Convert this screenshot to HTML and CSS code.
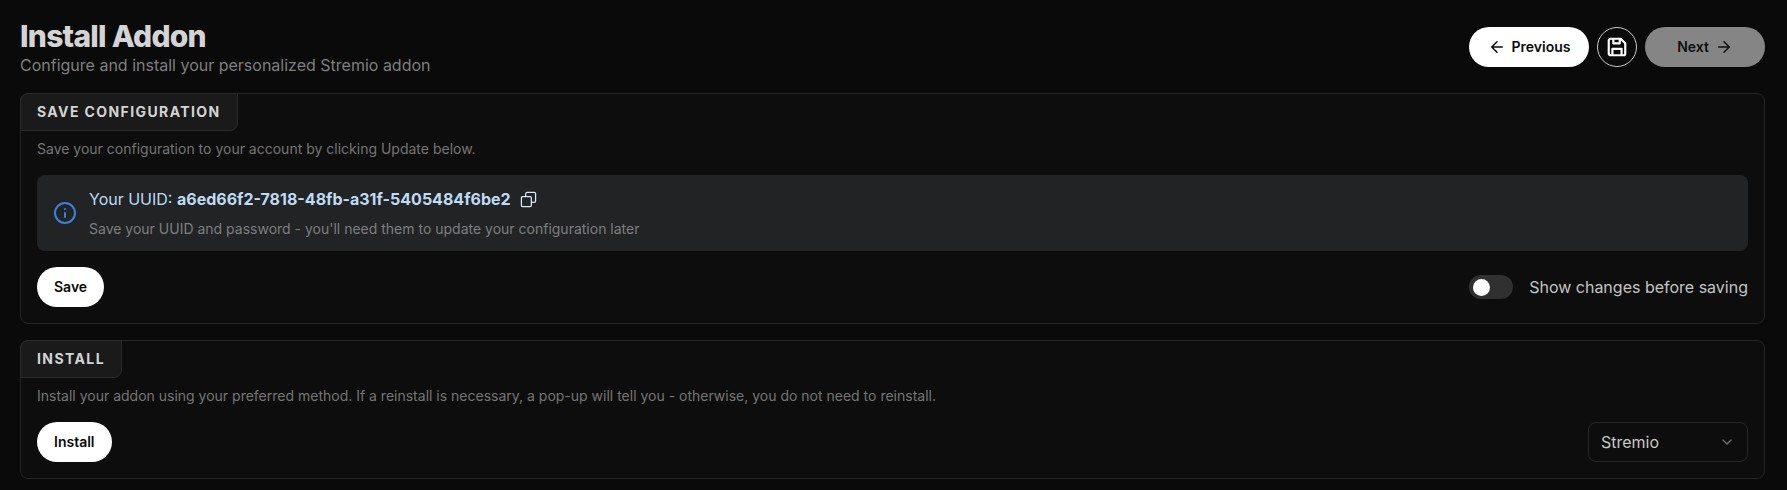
FILE: index.html
```html
<!DOCTYPE html>
<html lang="en">
<head>
<meta charset="utf-8">
<title>Install Addon</title>
<link rel="stylesheet" href="styles.css">
</head>
<body>
<main class="page">
  <header class="head">
    <div class="titles">
      <h1>Install Addon</h1>
      <p class="subtitle">Configure and install your personalized Stremio addon</p>
    </div>
    <div class="nav">
      <button class="btn btn-nav"><svg class="ico" viewBox="0 0 24 24"><path d="M19 12H5M12 19l-7-7 7-7"/></svg>Previous</button>
      <button class="btn-round"><svg class="ico-save" viewBox="0 0 24 24"><path d="M5 3h11l5 5v11a2 2 0 0 1-2 2H5a2 2 0 0 1-2-2V5a2 2 0 0 1 2-2z"/><path d="M8 3v5h7V3"/><path d="M7 21v-7h10v7"/></svg></button>
      <button class="btn btn-nav btn-off">Next<svg class="ico" viewBox="0 0 24 24"><path d="M5 12h14M12 5l7 7-7 7"/></svg></button>
    </div>
  </header>

  <section class="card">
    <h2 class="tab">SAVE CONFIGURATION</h2>
    <div class="body">
      <p class="desc">Save your configuration to your account by clicking Update below.</p>
      <div class="alert">
        <svg class="ico-info" viewBox="0 0 24 24"><circle cx="12" cy="12" r="10"/><path d="M12 16v-4M12 8h.01"/></svg>
        <div class="alert-text">
          <div class="uuid">Your UUID: <strong>a6ed66f2-7818-48fb-a31f-5405484f6be2</strong><svg class="ico-copy" viewBox="0 0 24 24"><rect x="2" y="8" width="14" height="14" rx="1.5"/><path d="M8 8V4a2 2 0 0 1 2-2h10a2 2 0 0 1 2 2v10a2 2 0 0 1-2 2h-4"/></svg></div>
          <p class="alert-sub">Save your UUID and password - you'll need them to update your configuration later</p>
        </div>
      </div>
      <div class="row">
        <button class="btn">Save</button>
        <label class="toggle"><span class="switch"><span class="knob"></span></span><span>Show changes before saving</span></label>
      </div>
    </div>
  </section>

  <section class="card">
    <h2 class="tab">INSTALL</h2>
    <div class="body">
      <p class="desc">Install your addon using your preferred method. If a reinstall is necessary, a pop-up will tell you - otherwise, you do not need to reinstall.</p>
      <div class="row">
        <button class="btn">Install</button>
        <div class="select"><span>Stremio</span><svg class="ico-chev" viewBox="0 0 24 24"><path d="M6 9l6 6 6-6"/></svg></div>
      </div>
    </div>
  </section>
</main>
</body>
</html>
```

FILE: styles.css
```css
* { box-sizing: border-box; }
html, body { margin: 0; background: #0a0a0a; }
body { font-family: Inter, "Liberation Sans", sans-serif; color: #e4e4e7; }
.page { padding: 17px 22px 0 20px; display: flex; flex-direction: column; gap: 16px; }
.head { display: flex; justify-content: space-between; align-items: center; height: 60px; }
h1 { margin: 0; font-size: 30px; line-height: 35px; font-weight: 800; letter-spacing: -0.75px; color: #d4d4d4; }
.subtitle { margin: 0; font-size: 16px; line-height: 22px; color: #7f7f7f; }
.nav { display: flex; gap: 8px; }
.btn { height: 40px; padding: 0 17px; border: 0; border-radius: 20px; background: #fff; color: #0a0a0a; font: 600 14px/38px Inter, sans-serif; display: flex; align-items: center; justify-content: center; gap: 6px; }
.btn-nav { width: 120px; }
.btn-off { background: #858585; color: #0f0f0f; }
.ico { width: 18px; height: 18px; fill: none; stroke: currentColor; stroke-width: 2; stroke-linecap: round; stroke-linejoin: round; }
.btn-round { width: 40px; height: 40px; padding: 0; border: 1px solid #c8c8c8; border-radius: 50%; background: #0a0a0a; display: flex; align-items: center; justify-content: center; }
.ico-save { width: 22px; height: 22px; fill: none; stroke: #fff; stroke-width: 2.4; stroke-linejoin: round; }
.card { border: 1px solid #242424; border-radius: 8px; background: #0d0d0d; }
.tab { display: table; margin: -1px 0 0 -1px; height: 38px; padding: 0 16px; border: 1px solid #2a2a2a; border-radius: 8px 0 8px 0; background: #1a1a1a; font-size: 14px; line-height: 36px; font-weight: 700; letter-spacing: 1.4px; color: #d4d4d4; }
.body { padding: 8px 16px 16px; }
.desc { margin: 0; font-size: 14px; line-height: 20px; color: #757575; }
.alert { margin-top: 16px; height: 76px; padding: 0 16px; border-radius: 8px; background: #212325; display: flex; align-items: center; gap: 12px; }
.ico-info { width: 24px; height: 24px; flex: none; fill: none; stroke: #3b82d6; stroke-width: 2; stroke-linecap: round; }
.alert-text { display: flex; flex-direction: column; gap: 8px; }
.uuid { font-size: 16px; line-height: 24px; color: #bfdbf4; display: flex; align-items: center; white-space: pre; }
.uuid strong { font-weight: 700; }
.ico-copy { width: 17px; height: 17px; margin-left: 9px; fill: none; stroke: #d9e8f5; stroke-width: 1.8; }
.alert-sub { margin: 0; font-size: 14px; line-height: 20px; color: #7d7f80; }
.row { margin-top: 16px; display: flex; justify-content: space-between; align-items: center; }
.toggle { display: flex; align-items: center; gap: 16px; font-size: 16px; color: #c4c4c4; }
.switch { width: 44px; height: 24px; border-radius: 12px; background: #303030; display: flex; align-items: center; padding-left: 4px; }
.knob { width: 17px; height: 17px; border-radius: 50%; background: #fff; }
.select { width: 160px; height: 40px; padding: 0 12px; border: 1px solid #262626; border-radius: 8px; display: flex; align-items: center; justify-content: space-between; font-size: 16px; line-height: 38px; color: #c8c8c8; }
.ico-chev { width: 16px; height: 16px; fill: none; stroke: #6f6f6f; stroke-width: 2; stroke-linecap: round; stroke-linejoin: round; }
```
